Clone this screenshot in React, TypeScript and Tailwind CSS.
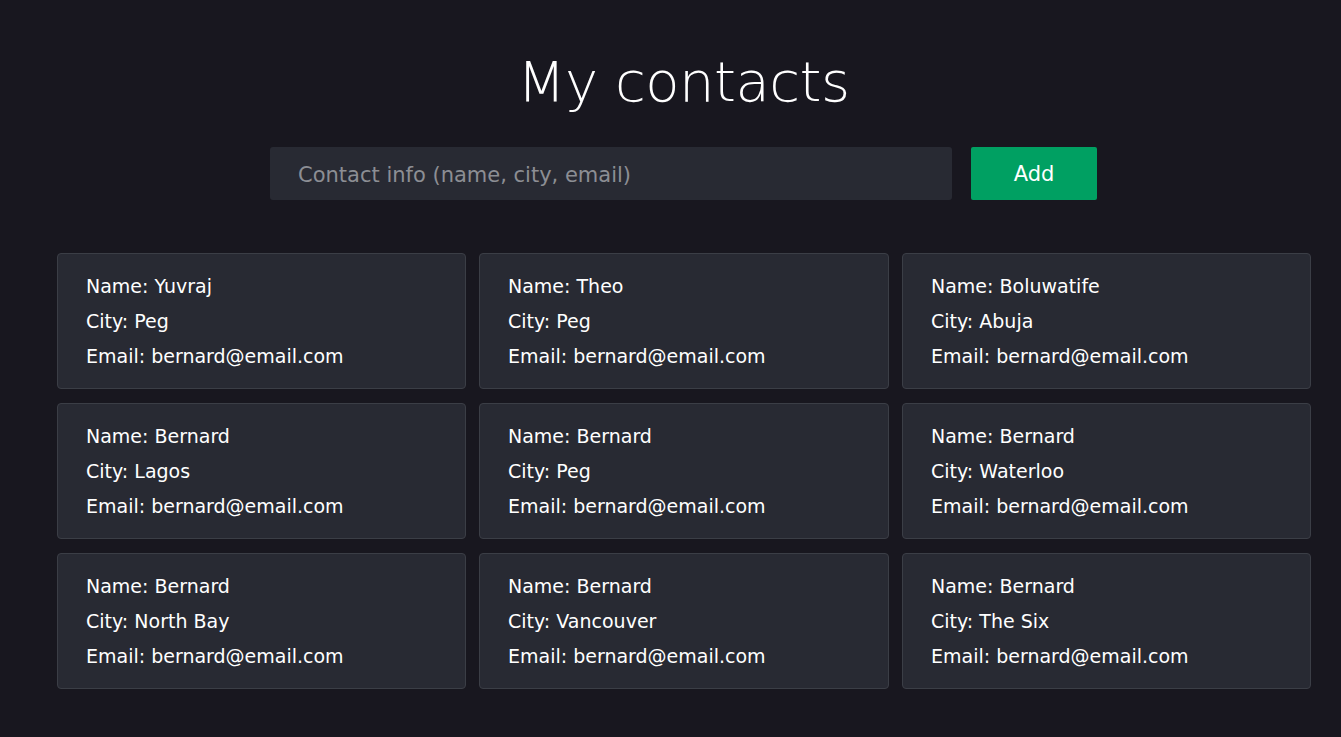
import React from "react";

const contacts = [
  { name: "Yuvraj", city: "Peg" },
  { name: "Theo", city: "Peg" },
  { name: "Boluwatife", city: "Abuja" },
  { name: "Bernard", city: "Lagos" },
  { name: "Bernard", city: "Peg" },
  { name: "Bernard", city: "Waterloo" },
  { name: "Bernard", city: "North Bay" },
  { name: "Bernard", city: "Vancouver" },
  { name: "Bernard", city: "The Six" },
];

export default function App() {
  return (
    <div
      className="min-h-[737px] w-full bg-[#18171f] text-white"
      style={{ fontFamily: '"DejaVu Sans", sans-serif' }}
    >
      <div className="flex flex-col items-center pt-[50px] pl-[26px]">
        <h1 className="text-[56px] leading-[64px] font-extralight tracking-[-0.5px]">My contacts</h1>
        <div className="mt-[33px] flex gap-[19px]">
          <input
            className="h-[53px] w-[682px] rounded-[3px] bg-[#282a33] px-[28px] pt-[2px] text-[21px] text-white placeholder:text-[#8c8e94] outline-none"
            placeholder="Contact info (name, city, email)"
          />
          <button className="h-[53px] w-[126px] rounded-[2px] bg-[#00a062] pt-[3px] text-[21px] text-white">
            Add
          </button>
        </div>
      </div>
      <div className="mt-[53px] grid grid-cols-[409px_410px_409px] gap-x-[13px] gap-y-[14px] pl-[57px]">
        {contacts.map((c, i) => (
          <div
            key={i}
            className="flex h-[136px] flex-col rounded-[4px] border border-[#3b3e46] bg-[#282a33] px-[28px] pt-[15px] text-[19px] leading-[35px]"
          >
            <div>Name: {c.name}</div>
            <div>City: {c.city}</div>
            <div>Email: bernard@email.com</div>
          </div>
        ))}
      </div>
    </div>
  );
}
